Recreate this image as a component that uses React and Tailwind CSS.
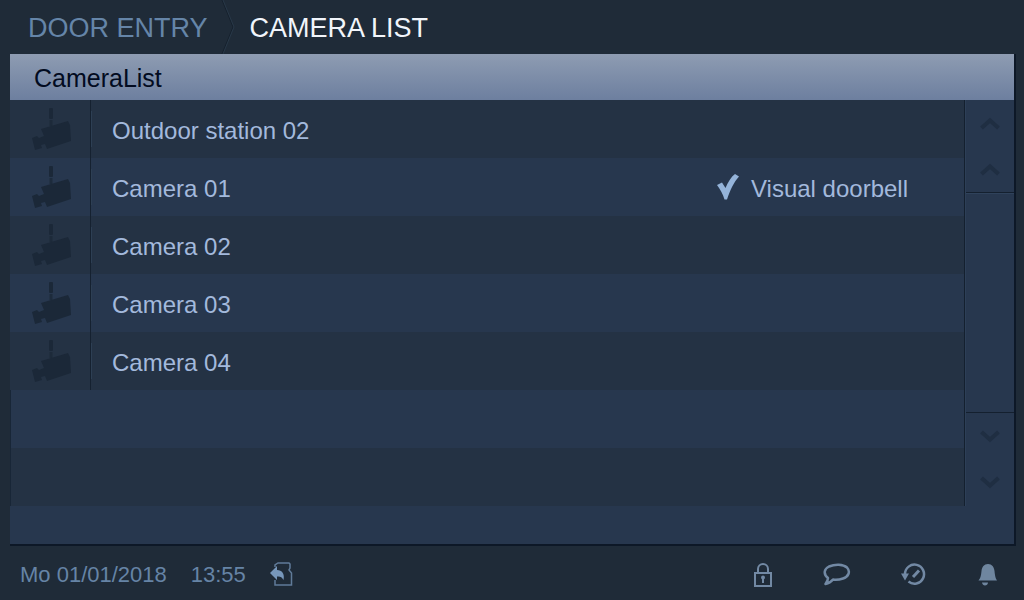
import React from "react";

const cameras = [
  { name: "Outdoor station 02" },
  { name: "Camera 01", note: "Visual doorbell" },
  { name: "Camera 02" },
  { name: "Camera 03" },
  { name: "Camera 04" },
];

const CameraIcon = () => (
  <svg width="40" height="44" viewBox="0 0 40 44" fill="#1b2838" aria-hidden="true">
    <rect x="17" y="1" width="4" height="11" rx="1" />
    <path d="M17.500 13h3v6h-3z" opacity="0.8" />
    <path d="M9 22L36 14L38 18L39 34L15 42L13 37L9 38L10 41L3 43L0 31L5 29L7 31L12 29Z" />
  </svg>
);

const CheckIcon = () => (
  <svg width="22" height="26" viewBox="0 0 22 26" fill="#94b3d9" aria-hidden="true">
    <path d="M0 11L5 8.500L8.500 14C11 8 14 3 18 0L22 2.500C17 8 13 16 10 25.500H7.500C6 20 3 15 0 11Z" />
  </svg>
);

const Chevron = ({ down }) => (
  <svg width="20" height="13" viewBox="0 0 20 13" fill="none" stroke="#1f2e42" strokeWidth="4" aria-hidden="true">
    <path d={down ? "M1.500 2L10 9.500L18.500 2" : "M1.500 11L10 3.500L18.500 11"} />
  </svg>
);

const CardIcon = () => (
  <svg width="24" height="26" viewBox="0 0 24 26" fill="none" aria-hidden="true">
    <path d="M5 6V4L8 2H19L20 3V7L19 9L21.500 12V24H5V19" stroke="#607b99" strokeWidth="1.500" />
    <path d="M0 12L7 5V9C12 9 15 13 13.500 19C12 16 10 15 7 15.500V19Z" fill="#7797bb" />
  </svg>
);

const LockIcon = () => (
  <svg width="20" height="26" viewBox="0 0 20 26" fill="none" stroke="#7289a4" strokeWidth="2" aria-hidden="true">
    <path d="M5 11V7a5 5 0 0 1 10 0v4" />
    <rect x="2" y="11" width="16" height="13" />
    <circle cx="10" cy="15.500" r="2" fill="#7289a4" stroke="none" />
    <path d="M10 16v5" />
  </svg>
);

const BubbleIcon = () => (
  <svg width="28" height="24" viewBox="0 0 28 24" fill="none" stroke="#7289a4" strokeWidth="2.500" strokeLinejoin="round" aria-hidden="true">
    <path d="M5 15C0 11 1 6 6 3.500C12 1 20 1 24 4.500C28 9 25 14 20 15.500C17 16.500 13 17 10 16.500C8 19 5 20.500 2.500 21C4 19 5 17.500 5 15Z" />
  </svg>
);

const HistoryIcon = () => (
  <svg width="26" height="24" viewBox="0 0 26 24" fill="none" stroke="#7289a4" strokeWidth="2.500" aria-hidden="true">
    <path d="M4 11A9.500 9.500 0 1 1 7.500 18.500" />
    <path d="M12 14L18 7.500" strokeWidth="3" />
    <path d="M0 10.500H8L4 17.500Z" fill="#7289a4" stroke="none" />
  </svg>
);

const BellIcon = () => (
  <svg width="20" height="26" viewBox="0 0 20 26" fill="#6f869f" aria-hidden="true">
    <path d="M11 2C15 2 17 5 17.500 9C18 14 18.500 16 20 18.500H1.500C3.500 16 4 14 4.500 9C5 5 7 2 11 2Z" />
    <path d="M5 20.500H11C11 24 5.500 25 5 20.500Z" />
  </svg>
);

const ScrollButton = ({ label, down }) => (
  <button type="button" aria-label={label} className="flex h-[46px] w-full items-center justify-center">
    <Chevron down={down} />
  </button>
);

const statusIcons = [
  { label: "Lock", Icon: LockIcon },
  { label: "Messages", Icon: BubbleIcon },
  { label: "History", Icon: HistoryIcon },
  { label: "Alarm", Icon: BellIcon },
];

export default function App() {
  return (
    <div className="flex min-h-screen flex-col bg-[#1f2b38] font-['Liberation_Sans',Arial,sans-serif]">
      <header className="flex h-[54px] items-center pl-7">
        <nav aria-label="Breadcrumb" className="flex h-full items-center text-[27px]">
          <a href="#door-entry" className="pt-0.5 text-[#6585a8]">DOOR ENTRY</a>
          <svg width="18" height="54" viewBox="0 0 18 54" fill="none" className="mx-3" aria-hidden="true">
            <path d="M2 0L13 27L2 54" stroke="#16212d" />
            <path d="M3 0L14 27L3 54" stroke="#283848" />
          </svg>
          <h1 className="pt-0.5 text-[#f1f5fb]">CAMERA LIST</h1>
        </nav>
      </header>

      <main className="mr-2 ml-2.5 flex flex-1 flex-col border-r-2 border-b-2 border-[#0d1827] bg-[#27374e]">
        <h2 className="flex h-[46px] items-center bg-linear-to-b from-[#8e9cb2] to-[#6d7f9f] pt-1 pl-6 text-[25px] text-[#020b20]">
          CameraList
        </h2>
        <div className="flex">
          <div className="flex-1 border-r border-[#14202f]">
            <ul>
              {cameras.map((camera) => (
                <li key={camera.name} className="flex h-[58px] items-center text-2xl text-[#a3b9dc] odd:bg-[#243244] even:bg-[#27374e]">
                  <div className="flex h-full w-[81px] items-center border-r border-[#152130] pl-[22px]">
                    <CameraIcon />
                  </div>
                  <span className="flex-1 border-l border-[#2d3f54] pt-1 pl-5">{camera.name}</span>
                  {camera.note && (
                    <div className="flex items-center gap-3 pr-14">
                      <CheckIcon />
                      <span className="pt-1">{camera.note}</span>
                    </div>
                  )}
                </li>
              ))}
            </ul>
            <div className="h-[58px] border-l border-[#182637] bg-[#27374e]" />
            <div className="h-[58px] border-l border-[#182637] bg-[#243244]" />
          </div>
          <div className="flex w-[49px] flex-col border-l border-[#2d3f57]">
            <div className="border-b border-[#14202f]">
              <ScrollButton label="First page" />
              <ScrollButton label="Page up" />
            </div>
            <div className="flex-1 border-t border-[#2f425b]" />
            <div className="border-t border-[#14202f] pb-px">
              <ScrollButton label="Page down" down />
              <ScrollButton label="Last page" down />
            </div>
          </div>
        </div>
      </main>

      <footer className="flex h-[54px] items-center justify-between pt-0.5 pr-[27px] pl-5 text-[22px] text-[#6684a6]">
        <div className="flex items-center gap-6">
          <span>Mo 01/01/2018</span>
          <span>13:55</span>
          <button type="button" aria-label="Memory card">
            <CardIcon />
          </button>
        </div>
        <div className="flex items-center gap-[50px] pt-0.5">
          {statusIcons.map(({ label, Icon }) => (
            <button key={label} type="button" aria-label={label}>
              <Icon />
            </button>
          ))}
        </div>
      </footer>
    </div>
  );
}
